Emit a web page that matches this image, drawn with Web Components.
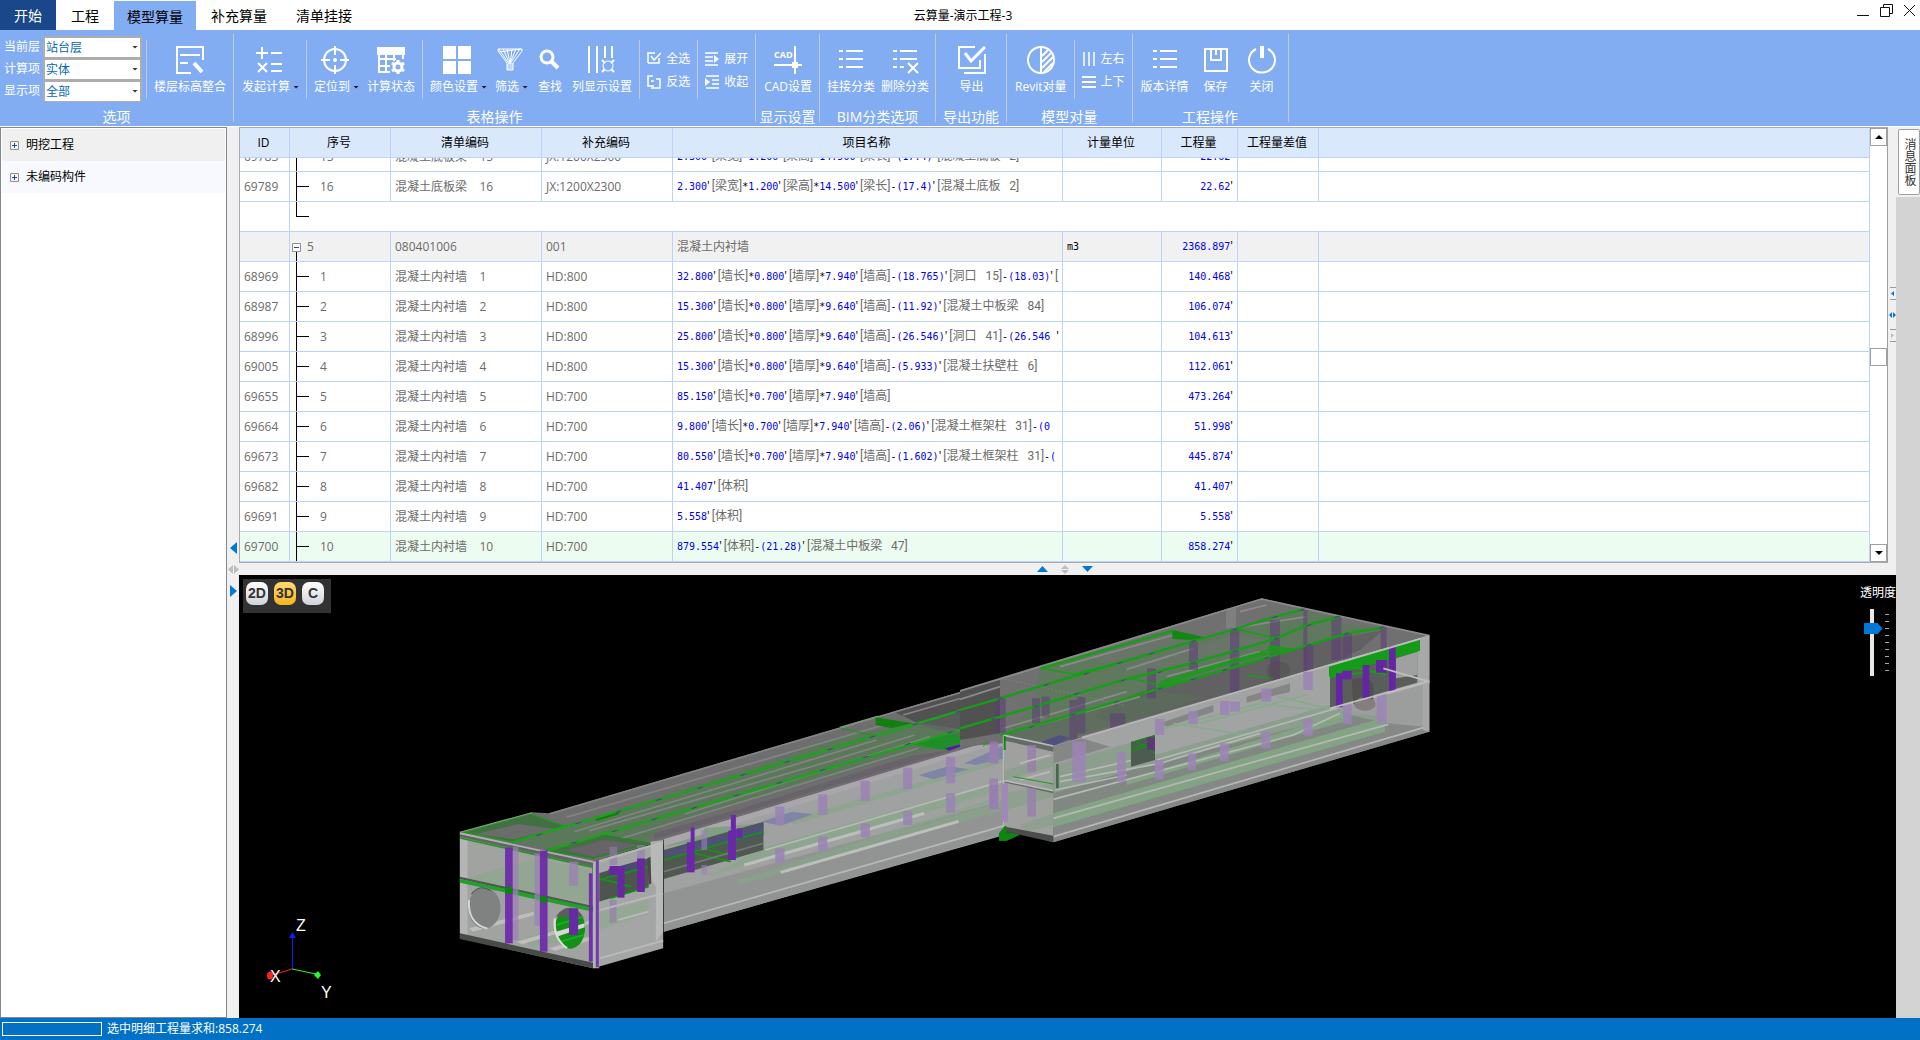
<!DOCTYPE html>
<html lang="zh-CN">
<head>
<meta charset="utf-8">
<title>云算量-演示工程-3</title>
<style>
html,body{margin:0;height:100%}
body{display:flex;flex-direction:column;overflow:hidden;background:#f0f0f0;
font:12px/16px "Open Sans","Noto Sans CJK SC",sans-serif;color:#000}
</style>
</head>
<body>
<title-bar>云算量-演示工程-3</title-bar>

<ribbon-bar>
  <ribbon-group>
    <field-list></field-list>
    <tool-rule></tool-rule>
    <tool-button><svg slot="icon" viewBox="0 0 28 28"><path d="M15 27H1V1h26v13M4 9h20M4 17h8" /><path d="M18 17l8 9" stroke-width="4"/></svg>楼层标高整合</tool-button>
    <span slot="title">选项</span>
  </ribbon-group>
  <ribbon-group>
    <tool-button caret><svg slot="icon" viewBox="0 0 28 28"><path d="M1 7h12M7 1v12M16 7h11M3 17l9 9M12 17l-9 9M16 18h11M16 25h11"/></svg>发起计算</tool-button>
    <tool-rule></tool-rule>
    <tool-button caret><svg slot="icon" viewBox="0 0 28 28"><circle cx="14" cy="14" r="11"/><path d="M14 0v9M14 19v9M0 14h9M19 14h9"/><circle cx="14" cy="14" r="1"/></svg>定位到</tool-button>
    <tool-button><svg slot="icon" viewBox="0 0 28 28"><path d="M1 2h26v6H1z" fill="#fff"/><path d="M2 5v21h11M26 5v8M2 13h17M2 20h11M9 8v18M17 8v7"/><circle cx="21" cy="21" r="4" stroke-width="3"/><path d="M21 14v3M21 25v3M15 17l3 2M24 23l3 2M15 25l3-2M24 19l3-2" stroke-width="3"/></svg>计算状态</tool-button>
    <tool-rule></tool-rule>
    <tool-button caret><svg slot="icon" viewBox="0 0 28 28"><path d="M0 0h13v13H0zM15 0h13v13H15zM0 15h13v13H0zM15 15h13v13H15z" fill="#fff" stroke="none"/></svg>颜色设置</tool-button>
    <tool-button caret><svg slot="icon" viewBox="0 0 28 28"><path d="M2 3h24v2l-9 12v7h-6v-7L2 5z" stroke-width="1"/><path d="M3 3l10 15M7 3l6 13M11 3l3 14M16 3l-2 15M20 3l-6 14M24 3L14 18M3 6l22-3M12 18v6M14 17v7M16 17v7" stroke-width="1"/></svg>筛选</tool-button>
    <tool-button><svg slot="icon" viewBox="0 0 28 28"><circle cx="11" cy="11" r="6" stroke-width="3"/><path d="M15 15l7 7" stroke-width="4"/></svg>查找</tool-button>
    <tool-button><svg slot="icon" viewBox="0 0 28 28"><path d="M1 0v27M9 0v27M17 0v12M24 0v12"/><circle cx="20" cy="20" r="5" stroke-width="1"/><path d="M14 14l3 3M26 14l-3 3M14 26l3-3M26 26l-3-3" stroke-width="2"/></svg>列显示设置</tool-button>
    <tool-rule></tool-rule>
    <tool-stack>
      <mini-button><svg slot="icon" viewBox="0 0 14 14"><path d="M8 1H1v10M1 11h11V6M4 4l3 4 7-7" stroke-width="1.500"/></svg>全选</mini-button>
      <mini-button><svg slot="icon" viewBox="0 0 14 14"><path d="M6 1H1v10h6M4 6h3M9 4h4v9H4" stroke-width="1.500"/></svg>反选</mini-button>
    </tool-stack>
    <tool-rule></tool-rule>
    <tool-stack>
      <mini-button><svg slot="icon" viewBox="0 0 14 14"><path d="M0 1h13M0 5h8M0 9h8M0 13h13" stroke-width="1.500"/><path d="M9 3l5 4-5 4z" fill="#fff" stroke="none"/></svg>展开</mini-button>
      <mini-button><svg slot="icon" viewBox="0 0 14 14"><path d="M1 1h13M7 5h7M7 9h7M1 13h13" stroke-width="1.500"/><path d="M0 3l5 4-5 4z" fill="#fff" stroke="none"/></svg>收起</mini-button>
    </tool-stack>
    <span slot="title">表格操作</span>
  </ribbon-group>
  <ribbon-group>
    <tool-button><svg slot="icon" viewBox="0 0 28 28"><path d="M21 0v28M0 19h28"/><path d="M18 16h6v6h-6z" fill="#fff" stroke="none"/><text x="0" y="12" font-size="9" font-weight="700" fill="#fff" stroke="none">CAD</text></svg>CAD设置</tool-button>
    <span slot="title">显示设置</span>
  </ribbon-group>
  <ribbon-group style="--pad:3px">
    <tool-button><svg slot="icon" viewBox="0 0 28 28"><path d="M2 5h4M9 5h17M2 13h4M9 13h17M2 21h4M9 21h17"/></svg>挂接分类</tool-button>
    <tool-button><svg slot="icon" viewBox="0 0 28 28"><path d="M2 5h4M9 5h17M2 13h4M9 13h17M2 21h4M9 21h4M17 17l10 10M27 17L17 27"/></svg>删除分类</tool-button>
    <span slot="title">BIM分类选项</span>
  </ribbon-group>
  <ribbon-group style="--title-pad:7px">
    <tool-button><svg slot="icon" viewBox="0 0 28 28"><path d="M17 1H1v21h21v-8M27 8v19H6"/><path d="M7 7l6 8L27 1" stroke-width="3"/></svg>导出</tool-button>
    <span slot="title">导出功能</span>
  </ribbon-group>
  <ribbon-group>
    <tool-button><svg slot="icon" viewBox="0 0 28 28"><ellipse cx="14" cy="14" rx="13" ry="13"/><path d="M14 1v26M15 10l6-6M15 16l9-9M15 22L26 11M17 26l9-9"/></svg>Revit对量</tool-button>
    <tool-rule></tool-rule>
    <tool-stack>
      <mini-button><svg slot="icon" viewBox="0 0 14 14"><path d="M2 0v14M7 0v14M12 0v14" stroke-width="1.500"/></svg>左右</mini-button>
      <mini-button><svg slot="icon" viewBox="0 0 14 14"><path d="M0 2h14M0 7h14M0 12h14" stroke-width="2"/></svg>上下</mini-button>
    </tool-stack>
    <span slot="title">模型对量</span>
  </ribbon-group>
  <ribbon-group style="--min:46px">
    <tool-button><svg slot="icon" viewBox="0 0 28 28"><path d="M2 5h4M9 5h17M2 13h4M9 13h17M2 21h4M9 21h17"/></svg>版本详情</tool-button>
    <tool-button><svg slot="icon" viewBox="0 0 28 28"><path d="M3 3h22v22H3zM9 3v11h10V3M14 3v6"/></svg>保存</tool-button>
    <tool-button><svg slot="icon" viewBox="0 0 28 28"><path d="M8 3a13 12.500 0 1 0 12 0"/><path d="M14 0v12" stroke-width="4"/></svg>关闭</tool-button>
    <span slot="title">工程操作</span>
  </ribbon-group>
</ribbon-bar>

<work-space>
  <project-tree slot="tree"></project-tree>
  <quantity-table slot="table"></quantity-table>
  <model-view slot="view"></model-view>
  <message-dock slot="dock">消息面板</message-dock>
</work-space>

<status-bar>选中明细工程量求和:858.274</status-bar>

<script>
const base = ':host,*{box-sizing:border-box}button{font:inherit;color:inherit;background:none;border:0;padding:0;margin:0}';
function define(name, css, html, ready) {
  const t = document.createElement('template');
  t.innerHTML = `<style>${base}${css}</style>${html}`;
  customElements.define(name, class extends HTMLElement {
    connectedCallback() {
      if (this.shadowRoot) return;
      this.attachShadow({mode: 'open'}).append(t.content.cloneNode(true));
      if (ready) ready(this, this.shadowRoot);
    }
  });
}

define('title-bar', `
:host{display:grid;grid-template-columns:1fr auto 1fr;height:30px;flex:none;background:#fff}
nav{display:flex;font-size:14px}
nav button{padding:0 14px;line-height:28px}
nav button.wide{padding:0 15px}
nav button.home{background:#19478a;color:#fff}
nav button.on{background:#82adf3;margin-top:1px;padding:0 13px;line-height:26px}
.name{line-height:32px;padding-left:6px}
.win{display:flex;justify-content:flex-end;gap:10px;padding:4px 4px 0 0;align-items:start}
svg{width:13px;height:13px;display:block;fill:none;stroke:#111}`,
`<nav><button class="home">开始</button><button class="wide">工程</button><button class="on">模型算量</button><button class="wide">补充算量</button><button>清单挂接</button></nav>
<div class="name"><slot></slot></div>
<div class="win"><button aria-label="最小化"><svg viewBox="0 0 13 13"><path d="M0 11.500h12"/></svg></button>
<button aria-label="还原"><svg viewBox="0 0 13 13"><path d="M.5 3.500h9v9h-9zM3.500 3.500v-3h9v9h-3"/></svg></button>
<button aria-label="关闭"><svg viewBox="0 0 13 13"><path d="M1 1l11 11M12 1L1 12"/></svg></button></div>`);

define('ribbon-bar', `:host{display:flex;flex:none;height:97px;background:#82adf3;color:#fff;border-bottom:1px solid #fff;padding:4px 0}`, `<slot></slot>`);

define('ribbon-group', `
:host{display:flex;flex-direction:column;border-right:1px solid #c3cbdb}
.tools{display:flex;flex:none;justify-content:center;height:65px;padding:0 3px 0 var(--edge,4px);align-items:stretch}
.title{flex:none;font-size:14px;line-height:20px;text-align:center;padding:8px var(--title-pad,3px) 0}`,
`<div class="tools"><slot></slot></div><div class="title"><slot name="title"></slot></div>`);

define('tool-rule', `:host{display:block;width:1px;margin:6px 3px 0;background:#c3cbdb}`, ``);

define('tool-button', `
:host{display:flex}
button{display:flex;flex-direction:column;align-items:center;padding:12px var(--pad,4px) 0;min-width:var(--min,36px)}
.label{display:flex;align-items:center;gap:3px;line-height:16px;margin-top:5px;white-space:nowrap}
.caret{display:none;width:6px;height:3px;background:#222;clip-path:polygon(0 0,100% 0,50% 100%)}
:host([caret]) .caret{display:block}
:host([caret]) ::slotted(svg){margin-right:4px}
::slotted(svg){width:28px;height:28px;flex:none;fill:none;stroke:#fff;stroke-width:2}`,
`<button><slot name="icon"></slot><span class="label"><span><slot></slot></span><i class="caret"></i></span></button>`);

define('tool-stack', `:host{display:flex;flex-direction:column;padding:17px 4px 0;gap:7px}`, `<slot></slot>`);
define('mini-button', `
:host{display:block}
button{display:flex;align-items:center;gap:5px;line-height:16px;white-space:nowrap}
::slotted(svg){width:14px;height:14px;fill:none;stroke:#fff}`,
`<button><slot name="icon"></slot><span><slot></slot></span></button>`);

define('field-list', `
:host{display:block;padding:2px 1px 0 0}
label{display:flex;align-items:center;gap:3px;height:22px}
.box{display:grid;width:99px;align-items:center}
.box>*{grid-area:1/1}
select{appearance:none;font:inherit;color:#0068b8;height:22px;width:100%;background:#fff;border:2px solid #adadad;border-bottom-width:1px;border-radius:0;padding:0 0 0 1px;margin:0}
i{justify-self:end;margin-right:4px;width:6px;height:3px;background:#333;clip-path:polygon(0 0,100% 0,50% 100%);pointer-events:none}`,
`<label>当前层<span class="box"><select><option>站台层</option></select><i></i></span></label>
<label>计算项<span class="box"><select><option>实体</option></select><i></i></span></label>
<label>显示项<span class="box"><select><option>全部</option></select><i></i></span></label>`);

define('work-space', `
:host{display:grid;flex:1;min-height:0;grid-template-columns:227px 12px minmax(0,1fr) 24px}
.left,.mid,.side{color:#0078d7}
.left{display:flex;flex-direction:column;align-items:center;justify-content:center;gap:11px;padding-bottom:6px}
.main{display:grid;min-height:0;grid-template-rows:minmax(0,436fr) 12px minmax(0,443fr)}
.mid{display:flex;justify-content:center;align-items:center;gap:13px;padding-right:6px}
.top{display:flex;min-height:0}.top ::slotted(*){flex:1;min-width:0}
.side{width:8px;display:flex;flex-direction:column;align-items:center;padding-top:160px}
svg{display:block;fill:currentColor}.off{color:#bdbdbd}`,
`<slot name="tree"></slot>
<div class="left"><svg width="7" height="12"><path d="M7 0v12L0 6z"/></svg><svg class="off" width="11" height="9"><path d="M5 0v9L0 4.500zM6 0v9l5-4.500z"/></svg><svg width="7" height="12"><path d="M0 0v12l7-6z"/></svg></div>
<div class="main"><div class="top"><slot name="table"></slot>
<div class="side"><svg width="7" height="55"><path fill="#999" d="M1 0h6v1H1zM1 12h6v1H1zM1 42h6v1H1zM1 54h6v1H1z"/><path d="M5 4v5L2 6.500zM3 25v6L0 28zM4 25v6l3-3z"/><path fill="#bdbdbd" d="M2 46v5l3-2.500z"/></svg></div></div>
<div class="mid"><svg width="11" height="6"><path d="M5.500 0L11 6H0z"/></svg><svg class="off" width="8" height="9"><path d="M4 0l4 4H0zM4 9l4-4H0z"/></svg><svg width="11" height="6"><path d="M0 0h11L5.500 6z"/></svg></div>
<slot name="view"></slot></div><slot name="dock"></slot>`);

define('project-tree', `
:host{display:block;background:#fff;border:1px solid #828790;padding:1px}
ul{list-style:none;margin:0;padding:0}
li{display:flex;align-items:center;gap:6px;height:32px;padding-left:7px;background:#f0f0f0}
li+li{background:#f8f9ff}
svg{width:11px;height:11px;fill:#f4f4f4;stroke:#919191}`,
`<ul role="tree"><li role="treeitem"><svg viewBox="0 0 11 11"><path d="M1.500 1.500h8v8h-8z"/><path stroke="#2b4a8f" d="M3 5.500h5M5.500 3v5"/></svg>明挖工程</li>
<li role="treeitem"><svg viewBox="0 0 11 11"><path d="M1.500 1.500h8v8h-8z"/><path stroke="#2b4a8f" d="M3 5.500h5M5.500 3v5"/></svg>未编码构件</li></ul>`);

/* Structural columns: [x, top, bottom, width] in the local coordinates of each half of the model. */
const cols = (list, fill, o) => list.map(c => `<rect x="${c[0]}" y="${c[1]}" width="${c[3] || 24}" height="${c[2] - c[1]}" fill="${fill}" opacity="${o}"/>`).join('');
const dots = list => list.map(d => `<path d="M${d[0] - 10} ${d[1] + 3}l14-5 6 0-14 6z" fill="#5b2a9c"/>`).join('');
const left = `
<path fill="#6d6e6d" d="M52 457L240 397 285 400 1465 0 1570-40V190L1475 170 400 545z"/>
<path fill="#515151" d="M1185 95L1465 0 1570-30V130L1475 165 1250 130z"/>
<path fill="#5b785b" d="M205 490L325 437 470 395 1050 170 1240 130 1300 138 1415 180 1180 235 580 440 540 480 400 525z"/>
<path fill="#666069" d="M790 385L1230 228 1340 210 560 478 560 460z" opacity=".8"/>
<path fill="#5f6160" d="M1240 130L1465 65V160L1415 180 1300 150z" opacity=".6"/>
<path fill="none" stroke="#838483" stroke-width="5" d="M285 402L1465 2M330 412L1180 128M1210 105L1465 20M390 452L1000 250 1240 165M350 455L1140 180M640 402L1280 170M460 480L1250 205"/>
<path fill="#437043" stroke="#16a016" stroke-width="3" d="M65 457L235 402 325 438 190 486z"/>
<path fill="#6b6d6b" d="M95 462L205 432 300 447 195 478z"/>
<path fill="none" stroke="#829d82" stroke-width="3" d="M52 457L240 398M1045 142L1145 108"/>
<path fill="#447044" stroke="#16901a" stroke-width="3" d="M275 510L430 465 550 490 400 535z"/>
<path fill="#686368" d="M330 510L430 480 520 495 400 530z"/>
<path fill="#118011" d="M408 412L468 392 468 403 408 424zM1138 112L1235 130 1180 145 1138 135z"/>
<path fill="none" stroke="#10a010" stroke-width="3" d="M1048 145L1140 168M1220 190L1330 210M1400 180L1240 190"/>
<path fill="#0c9418" d="M1235 190L1330 158 1415 180 1330 212z" opacity=".7"/>
<path fill="#5a14b0" d="M1320 205L1365 192 1365 197 1330 212z"/>
<path stroke="#1ba31b" stroke-width="7" d="M185 488L1568 22M280 512L1568 80"/>
${dots([[260,463],[362,428],[467,394],[572,358],[680,322],[793,283],[908,244],[1020,207],[1130,169],[1242,132],[1355,94],[1465,56],[350,487],[457,452],[560,417],[665,382],[775,345],[887,307],[1000,269],[1112,230],[1222,192],[1334,156],[1448,117],[1555,78]])}
<path fill="#a0a2a1" d="M585 478L1475 170V465L585 755z"/>
<path fill="#aaa6ab" d="M585 478L1475 170V185L585 498z"/>
<path fill="#929493" d="M585 640L1475 360V462L585 755z"/>
<path fill="#829f86" d="M590 498L690 463 690 445 845 430V445L590 500z"/>
<path fill="#84a886" d="M850 500L1475 300V330L700 588zM775 600L1475 362V390L782 615zM920 415L1475 235V247L920 435zM900 555L1475 345V353L900 567z" opacity=".65"/>
<path fill="#8085a7" d="M840 425L920 395 975 403 890 437zM1250 285L1330 258 1380 268 1290 298zM1370 250L1475 195V235L1400 255z"/>
<path stroke="#bdbfbd" stroke-width="9" d="M795 555L1265 400M890 577L1355 424"/>
<path stroke="#b7b9b7" stroke-width="5" d="M585 730L1475 437M850 510L1475 302"/>
<path fill="#505951" d="M585 510L845 425V510L585 597z"/>
<path fill="#505079" d="M585 515L845 430V465L585 533z"/>
<path stroke="#129512" stroke-width="5" d="M585 540L845 455M665 520L760 545M700 510L780 530"/>
<path stroke="#777" stroke-width="5" d="M585 575L845 490"/>
${cols([[876,380,435],[876,505,548],[988,343,405],[988,470,512],[1099,302,363],[1099,430,472],[1210,263,328],[1210,393,435],[1322,230,310],[1322,340,398],[1435,190,250],[1435,315,388]], '#9a82b4', .85)}
${cols([[655,442,500,10],[645,487,577,20],[760,405,465,13],[753,452,540,20],[775,445,475,15]], '#6b26aa', 1)}
${cols([[683,450,510,15],[683,555,585,15]], '#9a82b4', .6)}
<path fill="#a1a3a1" d="M52 457L400 545V865L52 775z"/>
<path fill="#b4b5b4" d="M52 475L72 480V765L52 760z"/>
<path fill="#8da78e" opacity=".75" d="M75 592L250 535 390 570 390 670 85 600zM205 780L390 715V770L240 800z"/>
<path fill="#bdbfbd" d="M75 745L245 695V706L85 755zM200 785L390 722V732L215 793zM285 805L390 770V782L300 812z"/>
<path fill="#494b49" d="M52 760L400 848V865L52 777z"/>
<path fill="none" stroke="#1c9c20" stroke-width="5" d="M52 474L400 562V580"/>
<path fill="#606760" d="M52 457L400 543V560L52 471z"/>
<path fill="#b0b2b0" d="M52 457L400 543V548L52 463z"/>
<path fill="#505650" d="M52 590L400 678V686L52 597z"/>
<path fill="#20a12a" d="M52 597L400 683V695L52 608z"/>
${cols([[190,500,780,15],[247,520,738,15],[337,545,618,24]], '#9b7fb3', .7)}
${cols([[170,503,790,20],[261,512,815,20],[389,580,845,10]], '#6f2bab', .95)}
<path fill="#098510" d="M170 620h18v22h-18zM262 648h16v20h-16z"/>
<ellipse cx="116" cy="684" rx="42" ry="62" fill="#808281"/><path fill="none" stroke="#d5d5d5" stroke-width="5" d="M76 660q-5 70 48 86"/><path fill="none" stroke="#555" stroke-width="3" d="M82 643q20-33 50-11"/>
<ellipse cx="340" cy="745" rx="39" ry="61" fill="#148f17"/><path fill="#5c5e5c" d="M303 710q15-28 38-27 27 4 34 35l-34-10z"/><path fill="#d5dad5" d="M303 755L378 730V742L305 770z"/><path stroke="#10bd16" stroke-width="4" d="M305 735L375 710M312 786L375 765"/><path fill="none" stroke="#ddd" stroke-width="6" d="M300 715q-5 60 32 90"/>
<rect x="337" y="685" width="24" height="80" fill="#662ba2"/>
<path fill="#a4a6a5" d="M400 545L583 485V805L400 865z"/>
<path fill="#8da98e" d="M415 700L545 660V700L415 750z" opacity=".7"/>
<path fill="#4c554e" d="M415 580L545 535V620L415 665z"/><path fill="#4b4a72" d="M440 568L535 538V560L440 590z"/>
<path stroke="#119613" stroke-width="5" d="M415 600L545 560M415 595L500 620M445 655L545 620"/>
${cols([[443,558,585,25],[464,560,653,18],[515,535,636,20]], '#6826a5', 1)}
${cols([[443,500,555,20],[515,495,535,20],[443,660,728,18]], '#9679ad', .6)}
<path fill="#b3b5b3" d="M400 545L583 483V490L415 548zM400 545h16V865h-16z"/>
<rect x="407" y="540" width="8" height="322" fill="#743da9"/>
<path stroke="#bbb" stroke-width="5" d="M418 835L583 782M418 690L583 640M465 720L545 695"/>
<path fill="#bbbcbb" d="M550 485L583 480V755L564 785V620L552 600z" opacity=".85"/>
<path fill="#484948" d="M542 535L550 530 552 610 545 615z"/>
<path fill="#0b850c" d="M1462 458L1475 440V455L1515 462 1480 482H1462z"/>
`;
const right = `
<path fill="#6f706f" d="M0 330L120 293 905 55 1408 167V310L280 640 130 490 0 500z"/>
<path fill="#515151" d="M0 335L120 298V460L0 480z"/>
<path fill="#5d795c" d="M240 265L640 150 730 175 1020 90 1140 110 1140 130 1260 145 1000 215 600 325 280 430 130 465 230 370 230 330z" opacity=".9"/>
<path fill="#727372" d="M380 225L640 160 700 180 440 252zM480 265L820 165 940 180 600 275z" opacity=".6"/>
<path fill="#5b5b5b" d="M530 340L1110 180 1270 150 1200 210 1110 255 480 432 400 410z" opacity=".7"/>
<path fill="#5a6d59" d="M130 468L600 335 740 350 520 420 280 490z" opacity=".7"/>
<path fill="none" stroke="#898a89" stroke-width="5" d="M0 333L120 297 905 57 1408 167M0 358L120 320M300 260L640 165M840 95L920 75M850 140L1040 110M500 268L700 205M130 445L500 335M160 455L540 350M620 290L900 215"/>
<path fill="none" stroke="#888" stroke-width="2" stroke-dasharray="5 7" d="M122 295L490 375"/>
<path fill="#898a89" d="M798 86l30-3v63h-30z" opacity=".6"/>
${cols([[107,350,460,30],[216,355,430,24],[245,350,410,24],[328,360,480,24],[352,350,460,24],[450,400,445,46],[561,265,355,27],[687,185,270,27],[810,145,340,28],[930,120,300,30],[1030,90,290,12],[1032,195,270,28],[1114,110,240,30],[1148,160,245,28],[1262,142,240,18]], '#5e3d76', .55)}
<path fill="#118811" d="M637 150L735 172 690 180 637 177z"/>
<path stroke="#14a014" stroke-width="7" fill="none" d="M0 390L120 355 260 313 480 248 700 183 825 147 945 110 1030 88M0 445L230 378 490 300 700 248 825 212 950 175 1040 135 1140 110M120 466L340 403 600 325 800 268 920 233 1045 195 1160 160 1272 143M242 265L640 152"/>
<path stroke="#14a014" stroke-width="4" fill="none" d="M242 265L340 282 480 248M510 295L600 315M825 147L950 175M930 200L1000 208M860 285L940 295"/>
<path fill="#10a010" d="M595 320L600 303 790 245 920 210 930 195 1000 207 910 228 780 262 600 322z" opacity=".75"/>
${dots([[120,355],[260,313],[380,280],[480,248],[575,220],[700,183],[825,147],[945,110],[1027,88],[100,416],[230,378],[350,340],[490,300],[600,276],[700,248],[825,212],[950,175],[1047,135],[1130,110],[215,440],[340,403],[470,365],[600,325],[700,297],[795,269],[920,233],[1045,195],[1160,160],[1265,142]])}
<path fill="#505083" d="M245 485L300 465 330 475 280 498z"/><ellipse cx="955" cy="272" rx="35" ry="30" fill="#514b4d" opacity=".45"/>
<path fill="#9c9e9d" d="M280 498L1110 252 1408 167V310L1408 455 280 787z"/>
<path fill="#82a083" d="M280 560L520 485 600 455 1100 310 1148 400 1275 410 1277 455 280 745z" opacity=".65"/>
<path fill="#7e807f" d="M280 640L600 545 1000 445 1170 405 1280 430 1390 440 1408 455 280 787z" opacity=".75"/>
<path fill="#84aa86" d="M280 700L1275 412V455L280 742zM500 600L1150 400V425L500 615z" opacity=".8"/>
<path fill="#a2a4a3" d="M280 498L1110 252V375L585 525V465L513 487 280 550z"/>
<path fill="#858786" d="M280 498L365 475 450 500 280 550z"/>
<path fill="#707371" d="M600 430L760 375 760 395 620 440zM860 350L990 310V335L860 368z" opacity=".6"/>
<path stroke="#87ac89" stroke-width="5" fill="none" d="M600 450L900 370 1100 395M640 430L860 465M950 350L1130 390M720 430L1040 345"/>
<path fill="none" stroke="#b6b8b6" stroke-width="5" d="M365 473L1110 255 1408 168M280 770L1400 440M280 715L1080 490 1285 433M280 658L1000 465 1140 400M590 540L1408 305M300 590L520 540M300 605L600 550 900 460M285 630L500 585"/>
${cols([[337,485,605,40],[471,515,605,26],[585,417,465,28],[585,540,598,26],[685,393,433,28],[684,520,570,24],[780,363,405,28],[780,490,543,26],[810,365,395,30],[904,325,365,30],[904,455,505,28],[1030,275,330,28],[1030,415,467,28],[1149,370,432,26],[1250,340,430,30]], '#9c84b6', .85)}
<path fill="#4e5b50" d="M513 487L585 465V540L513 560z"/><path fill="none" stroke="#0b980d" stroke-width="3" d="M513 487L585 466M513 505L585 485M530 485L585 520M513 515L585 490"/><rect x="561" y="472" width="24" height="38" fill="#5b3975"/>
<path fill="#5a5e5a" d="M1110 285L1380 210V305L1110 383z"/><path fill="#9fa1a0" d="M1308 235L1372 215V285L1308 295z"/>
<path fill="#a7a9a8" d="M1372 180L1408 167V455L1388 450V310H1372z"/>
<path fill="#514f4f" d="M1175 300q30-15 65 10v55q-35 10-60 8z"/><ellipse cx="1215" cy="372" rx="32" ry="20" fill="#867e7e"/>
<path fill="#149c18" d="M1107 255L1380 177V212L1107 290z"/><path stroke="#0fa50f" stroke-width="5" d="M1110 290L1270 270M1180 262L1280 285"/>
${cols([[1128,280,382,20],[1147,272,298,28],[1208,255,356,20],[1248,240,278,32],[1287,200,333,20]], '#6325a4', 1)}
<path stroke="#bdbebd" stroke-width="5" d="M1107 257L1380 177M1110 385L1408 303M1270 265L1408 305"/>
<path fill="#9fa19f" d="M133 465L280 500V787L135 745z"/>
<path fill="#829f84" opacity=".55" d="M135 570L280 530V560L135 600zM135 640L280 610V650L135 690zM180 735L280 700V735L200 755z"/>
<path fill="#656a67" d="M133 468L280 498V515L135 482zM135 600L280 630V640L135 608z"/>
<path fill="#4a4d4a" d="M135 740L280 767V787L135 755z"/>
${cols([[90,485,550,24],[88,595,685,26],[202,495,577,26],[202,625,710,26]], '#987cae', .75)}
<path fill="none" stroke="#b9bbb9" stroke-width="5" d="M131 466V740M133 466L280 498M135 602L280 632M180 550L270 525M180 600L270 575"/>
<path fill="#0e850f" d="M131 468h6v42h-6zM117 760L133 740V758L180 765 140 782H117zM133 738h6v20h-6z"/>
<path fill="#4b6650" d="M288 552h8v73h-8z"/><rect x="124" y="610" width="20" height="115" fill="#a089b5"/>
<path fill="none" stroke="#16a016" stroke-width="3" d="M160 590L280 612M70 500l8-12 4 8"/>
`;

define('model-view', `
:host{display:grid;background:#000;min-height:0;overflow:hidden;grid-template-columns:minmax(0,1fr) 36px;color:#fff}
.stage,.tools,.alpha{grid-row:1}
.stage{grid-column:1/3;width:100%;height:100%;min-height:0}
.tools{grid-column:1;align-self:start;justify-self:start;margin:4px;display:flex;gap:6px;padding:3px 7px 8px 3px;background:#323232}
.tools button{width:22px;height:23px;border-radius:7px;background:linear-gradient(#fff,#cfd3d8);color:#333;font:700 14px/23px "Liberation Sans",sans-serif}
.tools button.on{background:linear-gradient(#ffda72,#f5b41c)}
.alpha{grid-column:2;padding-top:10px;white-space:nowrap;display:grid;justify-items:start;align-content:start;gap:8px}
.alpha label{line-height:16px}
.row{display:flex;gap:2px;padding-left:3px}
input{appearance:none;writing-mode:vertical-lr;width:20px;height:67px;margin:0;background:linear-gradient(#e7e7e7,#e7e7e7) 7px 0/4px 100% no-repeat}
input::-webkit-slider-thumb{appearance:none;width:19px;height:11px;background:#0078d7;clip-path:polygon(0 0,75% 0,100% 50%,75% 100%,0 100%)}
.ticks{width:4px;height:57px;margin-top:5px;background:repeating-linear-gradient(#aaa 0 1px,#000 1px 7px)}
text{font:16px "Liberation Sans",sans-serif;fill:#fff}`,
`<svg class="stage" viewBox="239 575 1657 443" preserveAspectRatio="xMinYMin meet" aria-label="三维模型">
<g transform="translate(440 680) scale(.38275 .33333)">${left}</g>
<g transform="translate(960 580) scale(.33333)">${right}</g>
<g fill="none" stroke-width="1"><path stroke="#1a1aff" d="M292.500 969V936"/><path stroke="#f22" d="M292 969l-20 6"/><path stroke="#2f2" d="M292 969l24 5"/></g>
<path fill="#1a1aff" d="M289 938l3.500-6 3.500 6z"/><ellipse cx="270" cy="975.500" rx="3" ry="4" fill="#f22"/><path fill="#2f3" d="M314 975l4-4 3 4-3 4z"/>
<text x="296" y="931">Z</text><text x="270" y="982">X</text><text x="321" y="998">Y</text></svg>
<div class="tools"><button>2D</button><button class="on">3D</button><button>C</button></div>
<div class="alpha"><label for="op">透明度</label><div class="row"><input id="op" type="range" min="0" max="100" value="25"><span class="ticks"></span></div></div>`);

define('message-dock', `
:host{display:flex;flex-direction:column;background:#d3d3d3}
div{background:#f0f0f0;padding:2px 0 2px 2px}
button{display:block;width:22px;height:66px;background:#fff;border:1px solid #a0a0a0;border-radius:2px;color:#333;writing-mode:vertical-rl;text-orientation:upright;line-height:20px;text-align:center}`,
`<div><button><slot></slot></button></div>`);

define('status-bar', `
:host{display:flex;flex:none;align-items:center;gap:5px;height:22px;padding-left:2px;background:#0071c5;color:#fff}
.progress{width:100px;height:14px;border:1px solid #fff}`,
`<div class="progress" role="progressbar"></div><span><slot></slot></span>`);

const sp = '\u00a0\u00a0\u00a0\u00a0';
const rows = [
  ['69783', 15, '混凝土底板梁', 'JX:1200X2300', "2.300'[梁宽]*1.200'[梁高]*14.500'[梁长]-(17.4)'[混凝土底板~2]", '22.62'],
  ['69789', 16, '混凝土底板梁', 'JX:1200X2300', "2.300'[梁宽]*1.200'[梁高]*14.500'[梁长]-(17.4)'[混凝土底板~2]", '22.62'],
  null, 'group',
  ['68969', 1, '', 'HD:800', "32.800'[墙长]*0.800'[墙厚]*7.940'[墙高]-(18.765)'[洞口~15]-(18.03)'[", '140.468'],
  ['68987', 2, '', 'HD:800', "15.300'[墙长]*0.800'[墙厚]*9.640'[墙高]-(11.92)'[混凝土中板梁~84]", '106.074'],
  ['68996', 3, '', 'HD:800', "25.800'[墙长]*0.800'[墙厚]*9.640'[墙高]-(26.546)'[洞口~41]-(26.546 '", '104.613'],
  ['69005', 4, '', 'HD:800', "15.300'[墙长]*0.800'[墙厚]*9.640'[墙高]-(5.933)'[混凝土扶壁柱~6]", '112.061'],
  ['69655', 5, '', 'HD:700', "85.150'[墙长]*0.700'[墙厚]*7.940'[墙高]", '473.264'],
  ['69664', 6, '', 'HD:700', "9.800'[墙长]*0.700'[墙厚]*7.940'[墙高]-(2.06)'[混凝土框架柱~31]-(0", '51.998'],
  ['69673', 7, '', 'HD:700', "80.550'[墙长]*0.700'[墙厚]*7.940'[墙高]-(1.602)'[混凝土框架柱~31]-(", '445.874'],
  ['69682', 8, '', 'HD:700', "41.407'[体积]", '41.407'],
  ['69691', 9, '', 'HD:700', "5.558'[体积]", '5.558'],
  ['69700', 10, '', 'HD:700', "879.554'[体积]-(21.28)'[混凝土中板梁~47]", '858.274']
];
function formula(s) {
  return s.replace(/\[[^\]]*\]?|[^\[]+/g, p => p[0] === '['
    ? `<span class="n">${p.replace('~', '\u00a0\u00a0\u00a0')}</span>`
    : `<span class="m">${p.replace(/[*\-]/g, '<b>$&</b>').replace("'", "<b class='q'>'</b>")}</span>`);
}
const body = rows.map((r, i) => {
  if (!r) return '<tr><td></td><td class="seq last" colspan="8"></td></tr>';
  if (r === 'group') return `<tr class="group"><td></td><td class="seq head"><svg width="9" height="9"><path d="M.5.5h8v8h-8z" fill="#fafafa" stroke="#919191"/><path d="M2 4.500h5" stroke="#2b4a8f"/></svg>5</td><td>080401006</td><td>001</td><td>混凝土内衬墙</td><td><span class="m k">m3</span></td><td class="num"><span class="m">2368.897<b class="q">'</b></span></td><td></td><td></td></tr>`;
  return `<tr${i === 13 ? ' class="sel"' : ''}><td>${r[0]}</td><td class="seq">${r[1]}</td><td>${r[2] || '混凝土内衬墙'}${sp}${r[1]}</td><td>${r[3]}</td><td class="f">${formula(r[4])}</td><td></td><td class="num"><span class="m">${r[5]}<b class="q">'</b></span></td><td></td><td></td></tr>`;
}).join('');

define('quantity-table', `
:host{display:grid;grid-template-columns:minmax(0,1fr) 17px;background:#fff;border:1px solid #a9abb0;border-right-color:#a0a0a0}
.scroll{overflow:hidden;min-height:0}
table{table-layout:fixed;width:100%;border-collapse:separate;border-spacing:0}
th,td{height:30px;padding:0 4px;border:solid #bdd3fb;border-width:0 1px 1px 0;line-height:16px;white-space:nowrap;overflow:hidden;text-align:left;font-weight:400}
td:nth-child(5){padding-right:0}
th{position:sticky;top:0;z-index:1;background:#dae8fc;text-align:center;padding:0 4px 0 2px}
td{color:#6b6b6b}
.seq{padding-left:30px;background:linear-gradient(#000,#000) 6px 0/1px 100% no-repeat border-box,linear-gradient(#000,#000) 6px 14px/13px 1px no-repeat}
.last{background:linear-gradient(#000,#000) 6px 0/1px 15px no-repeat,linear-gradient(#000,#000) 6px 14px/13px 1px no-repeat}
.head{padding-left:2px;background:linear-gradient(#000,#000) 6px 19px/1px 11px no-repeat border-box}
.head svg{vertical-align:-1px;margin-right:6px}
.group{background:#f1f1f1}.sel{background:#edfcf0}
.num{text-align:right}
.m{font:10px/16px "DejaVu Sans Mono","Noto Sans CJK SC",monospace;color:#0000f0}
.m b{font-weight:400;color:#000}.k{color:#000}
.m .q{font-family:"Open Sans",sans-serif;font-size:12px}
.f .q{padding-right:2px}
.n{font-family:Roboto,"Noto Sans CJK SC",sans-serif}
.bar{display:flex;flex-direction:column;justify-content:space-between}
.bar button,.thumb{width:17px;height:18px;border:1px solid #a0a0a0;background:#fff;display:grid;place-items:center}
.thumb{margin-top:24px}`,
`<div class="scroll"><table><colgroup><col style="width:50px"><col style="width:101px"><col style="width:151px"><col style="width:131px"><col style="width:390px"><col style="width:99px"><col style="width:76px"><col style="width:81px"><col></colgroup>
<thead><tr><th>ID</th><th>序号</th><th>清单编码</th><th>补充编码</th><th>项目名称</th><th>计量单位</th><th>工程量</th><th>工程量差值</th><th></th></tr></thead><tbody>${body}</tbody></table></div>
<div class="bar"><button aria-label="向上"><svg width="8" height="4"><path d="M4 0l4 4H0z"/></svg></button><span class="thumb"></span><button aria-label="向下"><svg width="8" height="4"><path d="M0 0h8L4 4z"/></svg></button></div>`,
(el, root) => { root.querySelector('.scroll').scrollTop = 16; });
</script>
</body>
</html>
